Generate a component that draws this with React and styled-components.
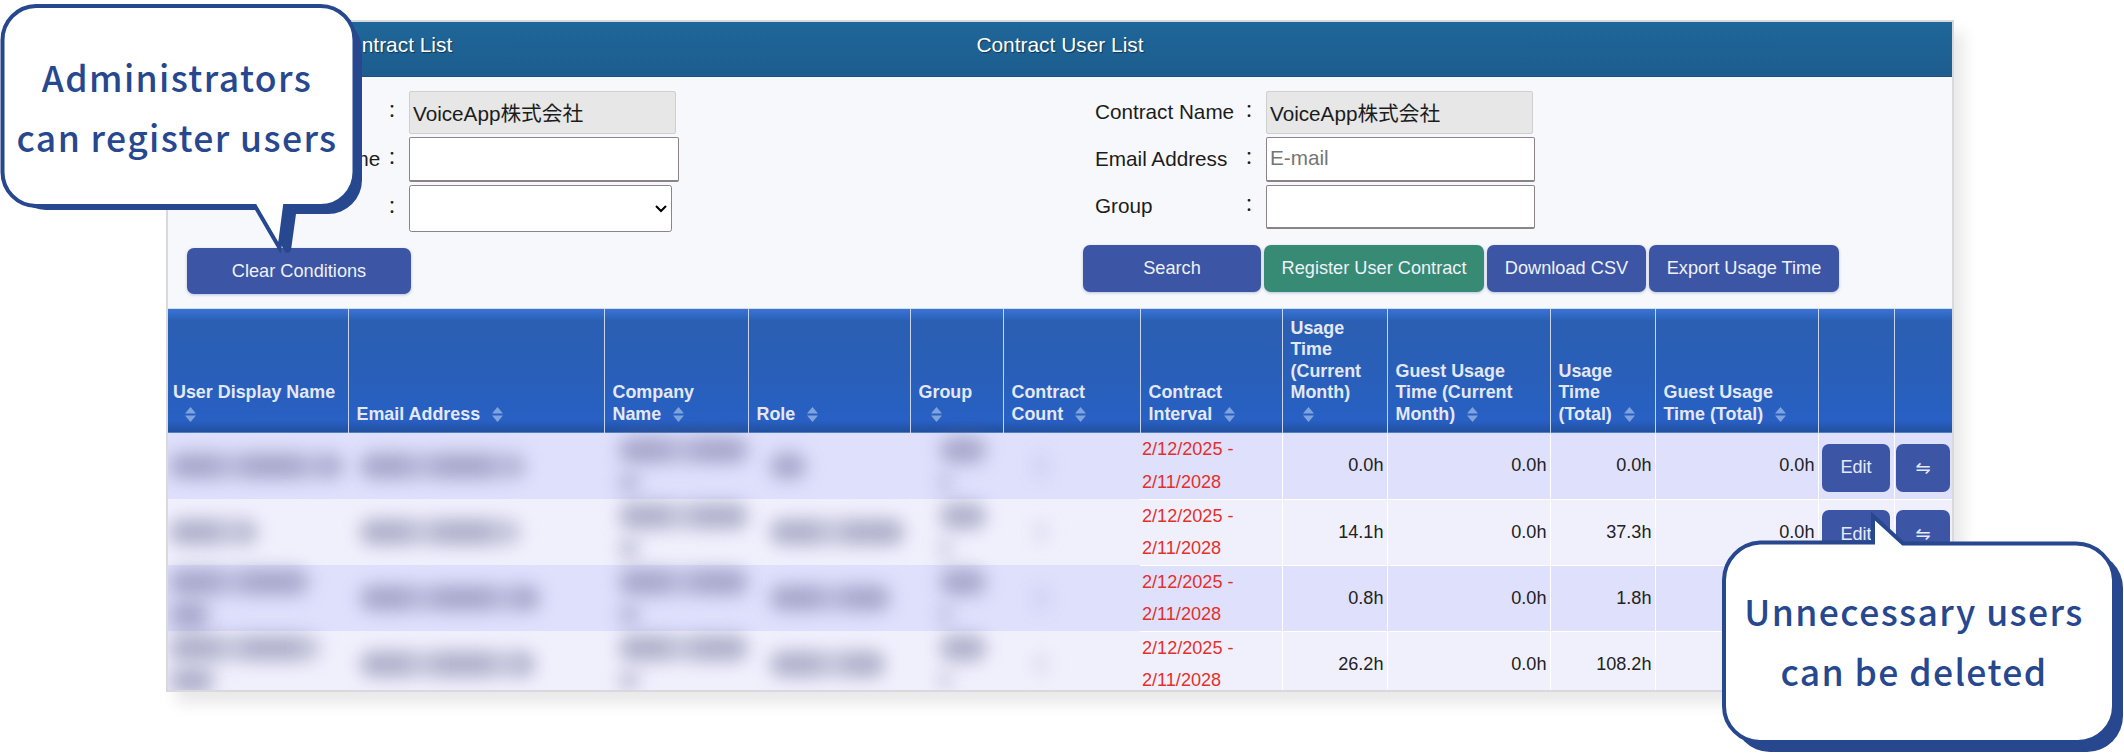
import styled, { createGlobalStyle } from "styled-components";

const GlobalStyle = createGlobalStyle`
  html, body {
    margin: 0;
    background: #fff;
    overflow: hidden;
  }
  * {
    box-sizing: border-box;
  }
`;

const Page = styled.div`
  position: relative;
  width: 2124px;
  height: 753px;
  padding: 20px 0 0 166px;
  font-family: "Liberation Sans", "Noto Sans CJK JP", sans-serif;
  color: #1c1c1c;
  overflow: hidden;
`;

const Frame = styled.div`
  width: 1788px;
  height: 672px;
  border: 2px solid #d9d9dd;
  box-shadow: 10px 12px 14px rgba(0, 0, 0, 0.09);
  overflow: hidden;
`;

const TitleBar = styled.div`
  display: grid;
  grid-template-columns: 1fr auto 1fr;
  height: 55px;
  padding-top: 12px;
  background: linear-gradient(#1f6699, #1d5d8f);
  border-bottom: 1px solid #1a4f80;
`;

const Title = styled.div`
  padding-left: ${(p) => p.$left || 0}px;
  font-size: 20.9px;
  line-height: 22px;
  color: #fff;
  text-shadow: 1px 1px 1px rgba(0, 0, 0, 0.45);
`;

const Form = styled.div`
  display: grid;
  grid-template-columns: 892px 1fr;
  height: 232px;
  padding-top: 14px;
  background: #f7f8fb;
  border-bottom: 1px solid #d5dbe8;
`;

const FormColumn = styled.div`
  padding-left: ${(p) => p.$left}px;
`;

const Field = styled.div`
  display: grid;
  grid-template-columns: ${(p) => p.$label}px 18px 1fr;
  column-gap: 8px;
  align-items: center;
  margin-bottom: 3px;
`;

const Label = styled.label`
  align-self: ${(p) => (p.$top ? "start" : "center")};
  margin-top: -2px;
  font-size: 20.7px;
  white-space: nowrap;
`;

const Colon = styled.span`
  font-size: 18px;
  text-align: center;
  font-family: "Noto Sans CJK JP", sans-serif;
  line-height: 18px;
  margin-top: -6px;
`;

const TextBox = styled.input`
  display: block;
  width: ${(p) => p.$w}px;
  height: ${(p) => p.$h}px;
  padding: 0 3px 2px;
  font: 20.7px "Liberation Sans", "Noto Sans CJK JP", sans-serif;
  color: #1c1c1c;
  background: ${(p) => (p.readOnly ? "#e7e7e7" : "#fff")};
  border: 1px solid ${(p) => (p.readOnly ? "#cfcfcf" : "#8b8385")};
  border-bottom-width: ${(p) => (p.readOnly ? 1 : 2)}px;
  border-radius: 2px;
  outline: none;

  &::placeholder {
    color: #767676;
  }
`;

/* native select drawn at 1.3x so its chevron has the size of the reference */
const SelectBox = styled.select`
  display: block;
  zoom: 1.295;
  width: 203px;
  height: 36.300px;
  font: 16px "Liberation Sans", sans-serif;
  background: #fff;
  border: 1px solid #8b8385;
  border-radius: 2px;
`;

const ActionRow = styled.div`
  display: flex;
  gap: 3px;
  margin-top: ${(p) => p.$top}px;
  margin-left: ${(p) => p.$left}px;
`;

const ActionButton = styled.button`
  width: ${(p) => p.$w}px;
  height: ${(p) => p.$h || 47}px;
  padding: 0;
  font: 18.2px "Liberation Sans", sans-serif;
  color: #eef1fa;
  background: ${(p) => (p.$green ? "#378a73" : "#3c55a5")};
  border: none;
  border-radius: 7px;
  box-shadow: 0 1px 3px rgba(60, 85, 165, 0.35);
`;

const Table = styled.table`
  width: 1784px;
  table-layout: fixed;
  border-collapse: collapse;
`;

const HeadCell = styled.th`
  height: 124px;
  padding: 0 ${(p) => p.$right ?? 17}px 8px ${(p) => p.$pad ?? 8}px;
  vertical-align: bottom;
  text-align: left;
  font-size: 17.9px;
  line-height: 21.4px;
  font-weight: 700;
  color: #e4e8f5;
  background: linear-gradient(
    #3a74d3 0,
    #3069c6 6px,
    #2a5fb3 12px,
    #295fb8 50%,
    #2860c4 90%,
    #22509f 99%,
    #6d9fe2 100%
  );
  border-right: 1px solid #c9d5ea;

  &:last-child {
    border-right: none;
  }
`;

const SortMark = styled.svg`
  display: inline-block;
  width: 11px;
  height: 15px;
  margin-left: 12px;
  vertical-align: -2px;
`;

const Row = styled.tr`
  height: 65.5px;
  background: ${(p) => (p.$odd ? "#dfe0fc" : "#f0f0fd")};
`;

const BlurCell = styled.td`
  padding: 0 0 0 ${(p) => p.$pad}px;
  vertical-align: middle;
`;

const SmudgeLine = styled.div`
  display: flex;
  align-items: center;
  height: 33px;
`;

const Smudge = styled.div`
  width: ${(p) => p.$w}px;
  height: ${(p) => (p.$thin ? 15 : 26)}px;
  border-radius: 13px;
  background: ${(p) =>
    p.$faint
      ? "rgba(110, 110, 150, 0.12)"
      : "repeating-linear-gradient(90deg, rgba(100, 100, 145, 0.46) 0 44px, rgba(100, 100, 145, 0.3) 56px 66px, rgba(100, 100, 145, 0.46) 82px)"};
  filter: blur(9px);
`;

const DateCell = styled.td`
  padding: 0 0 0 2px;
  font-size: 18.1px;
  line-height: 32.5px;
  color: #e2302d;
  border-right: 1px solid #fff;
  border-bottom: 1px solid #fff;
`;

const NumberCell = styled.td`
  padding: 0 3px 0 0;
  text-align: right;
  font-size: 18.1px;
  color: #222;
  border-right: 1px solid #fff;
  border-bottom: 1px solid #fff;
`;

const ButtonCell = styled.td`
  padding: 4px 0 0;
  text-align: center;
  border-right: 1px solid #fff;
  border-bottom: 1px solid #fff;
`;

const RowButton = styled.button`
  display: inline-block;
  width: ${(p) => p.$w}px;
  height: 48px;
  padding: 0;
  font: 18.1px "Liberation Sans", "DejaVu Sans", sans-serif;
  color: #e6eaf7;
  background: #3c55a5;
  border: none;
  border-radius: 7px;
`;

const Bubble = styled.div`
  position: absolute;
  left: ${(p) => p.$x}px;
  top: ${(p) => p.$y}px;
  width: ${(p) => p.$w}px;
  height: ${(p) => p.$h}px;
`;

const BubbleShape = styled.svg`
  position: absolute;
  inset: 0;
  width: 100%;
  height: 100%;
`;

const BubbleText = styled.div`
  position: absolute;
  left: ${(p) => p.$left}px;
  top: ${(p) => p.$top}px;
  width: ${(p) => p.$width}px;
  text-align: center;
  font-family: "Noto Sans CJK JP", sans-serif;
  font-size: 35.5px;
  font-weight: 500;
  line-height: 60px;
  letter-spacing: 1.4px;
  white-space: nowrap;
  color: #27478f;
`;

const columns = [180, 256, 144, 162, 93, 137, 142, 105, 163, 105, 163, 76, 58];

const headers = [
  { label: "User Display Name", pad: 5, right: 10 },
  { label: "Email Address" },
  { label: "Company Name" },
  { label: "Role" },
  { label: "Group" },
  { label: "Contract Count" },
  { label: "Contract Interval" },
  { label: "Usage Time (Current Month)" },
  { label: "Guest Usage Time (Current Month)" },
  { label: "Usage Time (Total)" },
  { label: "Guest Usage Time (Total)" },
  { label: "", plain: true },
  { label: "", plain: true },
];

const rows = [
  { name: [174], email: 165, role: 36, numbers: ["0.0h", "0.0h", "0.0h", "0.0h"] },
  { name: [88], email: 160, role: 135, numbers: ["14.1h", "0.0h", "37.3h", "0.0h"] },
  { name: [142, 40], email: 180, role: 120, numbers: ["0.8h", "0.0h", "1.8h", "0.0h"] },
  { name: [152, 45], email: 175, role: 115, numbers: ["26.2h", "0.0h", "108.2h", "0.0h"] },
];

function SortIcon() {
  return (
    <SortMark viewBox="0 0 11 15">
      <path d="M5.500 0 11 6.500H0z" fill="#7fa3dc" />
      <path d="M5.500 15 0 8.500h11z" fill="#7fa3dc" />
    </SortMark>
  );
}

function Blurred({ lines, pad }) {
  return (
    <BlurCell $pad={pad}>
      {lines.map((w, i) => (
        <SmudgeLine key={i}>
          <Smudge $w={w} $thin={w < 25} />
        </SmudgeLine>
      ))}
    </BlurCell>
  );
}

function FormField({ label, labelWidth, labelTop, children }) {
  return (
    <Field $label={labelWidth}>
      <Label $top={labelTop}>{label}</Label>
      <Colon>：</Colon>
      {children}
    </Field>
  );
}

export default function App() {
  return (
    <Page>
      <GlobalStyle />
      <Frame>
        <TitleBar>
          <Title $left={167}>Contract List</Title>
          <Title>Contract User List</Title>
          <div />
        </TitleBar>

        <Form>
          <FormColumn $left={34}>
            <FormField label="Contract Name" labelWidth={173}>
              <TextBox readOnly value="VoiceApp株式会社" $w={267} $h={43} />
            </FormField>
            <FormField label="User Display Name" labelWidth={173}>
              <TextBox $w={270} $h={45} />
            </FormField>
            <FormField label="Role" labelWidth={173} labelTop>
              <SelectBox>
                <option></option>
              </SelectBox>
            </FormField>
            <ActionRow $top={16} $left={-15}>
              <ActionButton $w={224} $h={46}>Clear Conditions</ActionButton>
            </ActionRow>
          </FormColumn>

          <FormColumn $left={35}>
            <FormField label="Contract Name" labelWidth={137}>
              <TextBox readOnly value="VoiceApp株式会社" $w={267} $h={43} />
            </FormField>
            <FormField label="Email Address" labelWidth={137}>
              <TextBox placeholder="E-mail" $w={269} $h={45} />
            </FormField>
            <FormField label="Group" labelWidth={137}>
              <TextBox $w={269} $h={44} />
            </FormField>
            <ActionRow $top={16} $left={-12}>
              <ActionButton $w={178}>Search</ActionButton>
              <ActionButton $w={220} $green>Register User Contract</ActionButton>
              <ActionButton $w={159}>Download CSV</ActionButton>
              <ActionButton $w={190}>Export Usage Time</ActionButton>
            </ActionRow>
          </FormColumn>
        </Form>

        <Table>
          <colgroup>
            {columns.map((w, i) => (
              <col key={i} width={w} />
            ))}
          </colgroup>
          <thead>
            <tr>
              {headers.map((h, i) => (
                <HeadCell key={i} $pad={h.pad} $right={h.right}>
                  {h.label}
                  {!h.plain && <SortIcon />}
                </HeadCell>
              ))}
            </tr>
          </thead>
          <tbody>
            {rows.map((r, i) => (
              <Row key={i} $odd={i % 2 === 0}>
                <Blurred lines={r.name} pad={1} />
                <Blurred lines={[r.email]} pad={12} />
                <Blurred lines={[134, 20]} pad={15} />
                <Blurred lines={[r.role]} pad={22} />
                <Blurred lines={[46, 10]} pad={30} />
                <BlurCell $pad={30}>
                  <SmudgeLine>
                    <Smudge $w={16} $faint />
                  </SmudgeLine>
                </BlurCell>
                <DateCell>
                  2/12/2025 -
                  <br />
                  2/11/2028
                </DateCell>
                {r.numbers.map((n, k) => (
                  <NumberCell key={k}>{n}</NumberCell>
                ))}
                <ButtonCell>
                  <RowButton $w={68}>Edit</RowButton>
                </ButtonCell>
                <ButtonCell>
                  <RowButton $w={54}>⇋</RowButton>
                </ButtonCell>
              </Row>
            ))}
          </tbody>
        </Table>
      </Frame>

      <Bubble $x={0} $y={0} $w={366} $h={258}>
        <BubbleShape viewBox="0 0 366 258">
          <path
            d="M46 16H328A34 34 0 0 1 362 50V180A34 34 0 0 1 328 214H296L291 250Q288 256 284 250L262 210H46A34 34 0 0 1 12 180V50A34 34 0 0 1 46 16Z"
            fill="#27478f"
          />
          <path
            d="M36 6H320.500A34 34 0 0 1 354.500 40V172A34 34 0 0 1 320.500 206H285L279.500 248L255 206H36A34 34 0 0 1 2.500 172V40A34 34 0 0 1 36 6Z"
            fill="#fff"
            stroke="#27478f"
            strokeWidth="4"
          />
        </BubbleShape>
        <BubbleText $left={1} $top={47} $width={352}>
          Administrators
          <br />
          can register users
        </BubbleText>
      </Bubble>

      <Bubble $x={1720} $y={510} $w={404} $h={243}>
        <BubbleShape viewBox="0 0 404 243">
          <rect x="14" y="42" width="389" height="200" rx="36" fill="#27478f" />
          <path
            d="M40 32.500H153V6L183 33.500H356A38 38 0 0 1 394 70V196A36 36 0 0 1 358 232H40A36 36 0 0 1 4 196V70A38 38 0 0 1 40 32.500Z"
            fill="#fff"
            stroke="#27478f"
            strokeWidth="4"
          />
        </BubbleShape>
        <BubbleText $left={-1} $top={71} $width={390}>
          Unnecessary users
          <br />
          can be deleted
        </BubbleText>
      </Bubble>
    </Page>
  );
}
